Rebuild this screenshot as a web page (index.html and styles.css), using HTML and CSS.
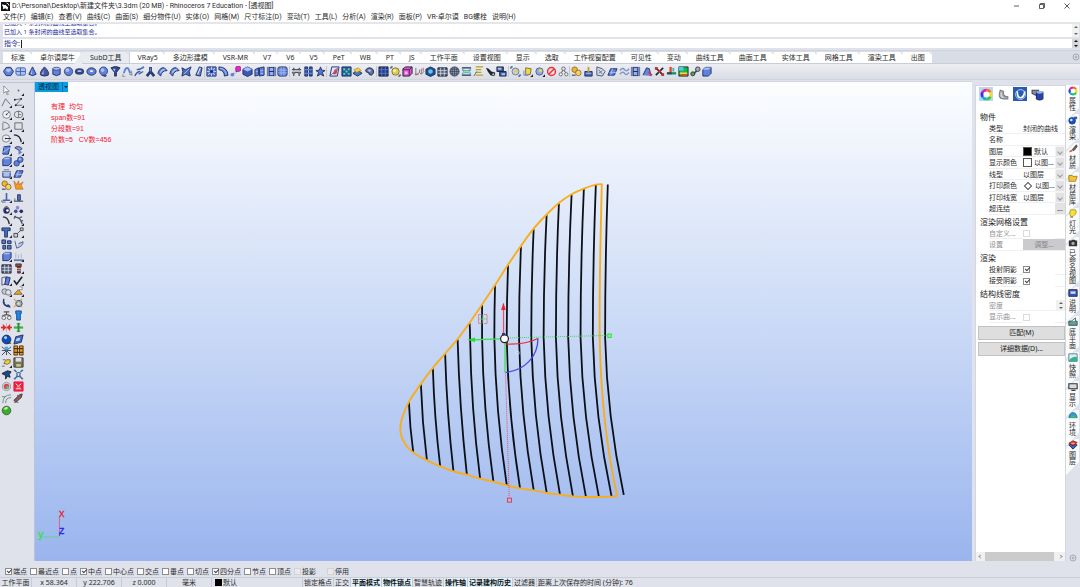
FILE: index.html
```html
<!DOCTYPE html>
<html lang="zh-CN">
<head>
<meta charset="utf-8">
<title>Rhinoceros 7 Education</title>
<link rel="stylesheet" href="styles.css">
</head>
<body>
<header class="titlebar">
  <svg class="app-icon" viewBox="0 0 10 10"><rect width="10" height="10" fill="#111"/><path d="M1 3c2-1 2 1 4 0l3 3-1 3-2-2-3 1c1-2 0-3-1-5z" fill="#fff"/><path d="M6 1l2 1 1 2" stroke="#fff" fill="none"/></svg>
  <h1 class="title">D:\Personal\Desktop\新建文件夹\3.3dm (20 MB) - Rhinoceros 7 Education - [透视图]</h1>
  <div class="window-buttons">
    <button aria-label="最小化"><svg viewBox="0 0 8 8"><path d="M1 4h5"/></svg></button>
    <button aria-label="还原"><svg viewBox="0 0 8 8"><path d="M1.500 2.500h4v4h-4zM2.500 2.500v-1h4v4h-1"/></svg></button>
    <button aria-label="关闭"><svg viewBox="0 0 8 8"><path d="M1.500 1.500l5 5M6.500 1.500l-5 5"/></svg></button>
  </div>
</header>
<nav class="menu">
  <button>文件(F)</button><button>编辑(E)</button><button>查看(V)</button><button>曲线(C)</button><button>曲面(S)</button><button>细分物件(U)</button><button>实体(O)</button><button>网格(M)</button><button>尺寸标注(D)</button><button>变动(T)</button><button>工具(L)</button><button>分析(A)</button><button>渲染(R)</button><button>面板(P)</button><button>VR-卓尔谟</button><button>BG螺栓</button><button>说明(H)</button>
</nav>
<section class="command">
  <div class="history"><p>已加入 1 条封闭的曲线至选取集合。</p><p>已加入 1 条封闭的曲线至选取集合。</p><span class="spin"><i class="up"></i><i class="down"></i></span></div>
  <div class="prompt"><label for="cmd">指令:</label><i class="caret"></i><input id="cmd" type="text"><span class="spin dark"><i class="up"></i><i class="down"></i></span></div>
</section>
<div class="tabbar">
  <nav class="tabs">
    <button>标准</button><button>卓尔谟犀牛</button><button class="active">SubD工具</button><button>VRay5</button><button>多边形建模</button><button>VSR-MR</button><button>V7</button><button>V6</button><button>V5</button><button>PeT</button><button>WB</button><button>PT</button><button>JS</button><button>工作平面</button><button>设置视图</button><button>显示</button><button>选取</button><button>工作视窗配置</button><button>可见性</button><button>变动</button><button>曲线工具</button><button>曲面工具</button><button>实体工具</button><button>网格工具</button><button>渲染工具</button><button>出图</button>
  </nav>
  <button class="gear" aria-label="选项"><svg viewBox="0 0 8 8"><circle cx="4" cy="4" r="3"/><circle cx="4" cy="4" r="1"/></svg></button>
</div>
<div class="toolbar" id="toolbar"></div>
<main class="main">
  <aside class="side"><div class="side-grid" id="side"></div></aside>
  <section class="viewport">
    <div class="view-label"><button class="view-name">透视图</button><button class="view-menu" aria-label="视图菜单"></button></div>
    <div class="curve-info"><p>有理&nbsp; 均匀</p><p>span数=91</p><p>分段数=91</p><p>阶数=5&nbsp;&nbsp; CV数=456</p></div>
    <svg class="scene" viewBox="34 82 937 480" preserveAspectRatio="xMinYMin meet">
      <g id="ribs" fill="none" stroke="#0b1018" stroke-width="1.800"></g>
      <path id="outline" fill="none" stroke="#f8ae1c" stroke-width="1.900"/>
      <path d="M602 184.300C600.500 250 599 300 600 345C601.500 405 608 455 617.500 497" fill="none" stroke="#f8ae1c" stroke-width="1.900"/>
      <g fill="none">
        <path d="M508 338.500L607 336" stroke="#3fdc52" stroke-dasharray="1 1"/>
        <rect x="608" y="334.500" width="3.500" height="3.500" stroke="#32e246" fill="#8cf09a"/>
        <path d="M500 339.500L475 340.300" stroke="#3be44e" stroke-width="1.300"/>
        <path d="M467 340.300l8-2.300v4.500z" fill="#22e032"/>
        <path d="M503.500 335V310" stroke="#e8505c" stroke-width="1.200"/>
        <path d="M503.400 303l2.300 7.500h-4.600z" fill="#ee2430"/>
        <path d="M505 344.500q20 1 33-5.500" stroke="#e62b3a" stroke-width="1.300"/>
        <path d="M538 339c0 18-13 32-32.500 34" stroke="#4348e6" stroke-width="1.300"/>
        <path d="M505 344v29" stroke="#50df66" stroke-width="1.500"/>
        <path d="M505.500 374L509.200 498" stroke="#dd526b" stroke-dasharray="1 1"/>
        <rect x="507.500" y="499" width="4" height="4" stroke="#e83c50"/>
        <path d="M509 344l7 8" stroke="#dfe6f5" stroke-dasharray="1 2"/>
        <circle cx="517.500" cy="353.500" r="1.800" stroke="#dfe6f5" stroke-width=".7"/>
        <path d="M502 335.500v-2h3v2" fill="#2532c8"/>
        <circle cx="504.500" cy="339.300" r="3.900" fill="#fff" stroke="#222" stroke-width="1.200"/>
        <path d="M481.500 315h-3v9h3M484 315h3v9h-3" stroke="#e2727c" stroke-width=".8"/>
        <path d="M479 319.500h8M482.800 315v9" stroke="#6ccf85" stroke-width=".8"/>
        <path d="M58.500 518v19" stroke="#d06a86"/>
        <path d="M58.500 538H42" stroke="#5fd38c"/>
        <path d="M58.500 537v-4" stroke="#5a50c8"/>
      </g>
      <text x="58" y="518" fill="#e62637" stroke="#e62637" class="axis">x</text>
      <text x="37" y="539" fill="#28e438" stroke="#28e438" class="axis">y</text>
      <text x="58" y="535" fill="#2028ee" stroke="#2028ee" class="axis">z</text>
    </svg>
  </section>
  <aside class="panel">
    <div class="panel-modes" id="modes"></div>
    <h2>物件</h2>
    <div class="props">
      <span>类型</span><b class="span">封闭的曲线</b>
      <label for="p-name">名称</label><input id="p-name" type="text"><i></i>
      <span>图层</span><b><em class="sw black"></em>默认</b><button class="drop" aria-label="图层"></button>
      <span>显示颜色</span><b><em class="sw"></em>以图...</b><button class="drop" aria-label="显示颜色"></button>
      <span>线型</span><b>以图层</b><button class="drop" aria-label="线型"></button>
      <span>打印颜色</span><b><em class="sw diamond"></em>以图...</b><button class="drop" aria-label="打印颜色"></button>
      <span>打印线宽</span><b>以图层</b><button class="drop" aria-label="打印线宽"></button>
      <span>超连结</span><b></b><button class="more">...</button>
    </div>
    <h2>渲染网格设置</h2>
    <div class="props dim">
      <label for="p-custom">自定义...</label><input id="p-custom" type="checkbox" disabled><i></i>
      <span>设置</span><button class="adjust" disabled>调整...</button>
    </div>
    <h2>渲染</h2>
    <div class="props">
      <label for="p-cast">投射阴影</label><input id="p-cast" type="checkbox" checked><i></i>
      <label for="p-recv">接受阴影</label><input id="p-recv" type="checkbox" checked><i></i>
    </div>
    <h2>结构线密度</h2>
    <div class="props dim">
      <label for="p-dens">密度</label><input id="p-dens" type="text" disabled><span class="spin"><i class="up"></i><i class="down"></i></span>
      <label for="p-iso">显示曲...</label><input id="p-iso" type="checkbox" disabled><i></i>
    </div>
    <div class="actions">
      <button>匹配(M)</button>
      <button>详细数据(D)...</button>
    </div>
    <div class="hscroll"><i class="left"></i><span></span><i class="right"></i></div>
  </aside>
  <nav class="vtabs">
    <div id="vtabs"></div>
    <button class="gear" aria-label="面板选项"><svg viewBox="0 0 8 8"><circle cx="4" cy="4" r="3"/><circle cx="4" cy="4" r="1"/></svg></button>
  </nav>
</main>
<section class="osnap">
  <label><input type="checkbox" checked>端点</label><label><input type="checkbox">最近点</label><label><input type="checkbox">点</label><label><input type="checkbox" checked>中点</label><label><input type="checkbox">中心点</label><label><input type="checkbox">交点</label><label><input type="checkbox">垂点</label><label><input type="checkbox">切点</label><label><input type="checkbox" checked>四分点</label><label><input type="checkbox">节点</label><label><input type="checkbox">顶点</label><label class="off"><input type="checkbox" disabled>投影</label><label class="off"><input type="checkbox" disabled>停用</label>
</section>
<footer class="status">
  <button class="c-plane">工作平面</button><span class="c-num">x 58.364</span><span class="c-num">y 222.706</span><span class="c-num">z 0.000</span><span class="c-num">毫米</span><button class="c-layer"><em></em>默认</button>
  <button>锁定格点</button><button>正交</button><button class="on">平面模式</button><button class="on">物件锁点</button><button>智慧轨迹</button><button class="on">操作轴</button><button class="on">记录建构历史</button><button>过滤器</button><span class="c-msg">距离上次保存的时间 (分钟): 76</span>
</footer>
<script src="app.js"></script>
</body>
</html>
```
FILE: styles.css
```css
* { box-sizing: border-box; margin: 0; padding: 0; }
html, body { height: 100%; }
body {
  display: flex; flex-direction: column; overflow: hidden;
  background: #dfe2ea; color: #2b2b2b;
  font: 7px/10px "Noto Sans", "Noto Sans CJK SC", sans-serif;
}
button { font: inherit; color: inherit; background: none; border: 0; white-space: nowrap; }
input { font: inherit; border: 0; background: none; min-width: 0; }
i, em { font-style: normal; }
b { font-weight: 400; }
svg { display: block; }

.titlebar { display: flex; align-items: center; height: 12px; padding-left: 1px; background: #fff; }
.titlebar, .menu { font-family: Roboto, "Noto Sans CJK SC", sans-serif; }
.app-icon { width: 9px; height: 9px; }
.title { flex: 1; padding-left: 2px; font-size: 7px; font-weight: 400; }
.window-buttons { display: flex; gap: 17px; padding-right: 9px; }
.window-buttons svg { width: 8px; height: 8px; fill: none; stroke: #333; stroke-width: .8; }

.menu { display: flex; gap: 5px; height: 12px; padding: 0 3px; background: #fff; border-bottom: 2px solid #e5e6ea; }
.menu button { line-height: 10px; }

.command { padding: 0 1px 0 3px; color: #1f2f96; height: 26px; }
.history { position: relative; display: flex; flex-direction: column; justify-content: flex-end; height: 13px; padding-left: 1px; background: #fff; overflow: hidden; font-size: 6px; }
.history p { flex: none; line-height: 9px; }
.prompt { position: relative; display: flex; align-items: center; height: 9px; margin-top: 2px; padding-left: 1px; background: #fff; }
.prompt input { flex: 1; height: 9px; outline: 0; }
.caret { width: 1px; height: 8px; margin-left: 1px; background: #222; }
.spin { display: flex; flex-direction: column; justify-content: space-around; align-items: center; background: #f1f1f2; width: 7px; }
.command .spin { position: absolute; right: 0; top: 0; bottom: 0; }
.spin.dark { background: #d5d6da; }
.up, .down { width: 0; height: 0; border: 2px solid transparent; }
.up { border-top: 0; border-bottom-color: #666; }
.down { border-bottom: 0; border-top-color: #666; }
.dark .up { border-bottom-color: #111; }
.dark .down { border-top-color: #111; }

.tabbar { display: flex; justify-content: space-between; align-items: stretch; height: 14px; padding-left: 3px; border-top: 1px solid #cfd3dc; border-bottom: 1px solid #c9cdd8; background: #d9dde6; }
.tabs { display: flex; background: #fff; margin-top: 1px; }
.tabs button { position: relative; padding: 0 7px 0 8px; line-height: 12px; }
.tabs button::after { content: ""; position: absolute; right: 0; top: 0; width: 3px; height: 3px; background: #dfe2ea; clip-path: polygon(0 0, 100% 0, 100% 100%); }
.tabs button.active { background: #e9ebf1; border-right: 1px solid #cbd0da; }
.tabs button.active::before { content: ""; position: absolute; right: 100%; top: 0; width: 8px; height: 12px; background: #e9ebf1; clip-path: polygon(100% 0, 100% 100%, 0 100%); }
.gear svg { width: 8px; height: 8px; fill: none; stroke: #a3a9b6; stroke-width: 1; }

.toolbar { display: flex; align-items: center; height: 16px; padding: 0 34% 0 3px; background: linear-gradient(#eceef3, #dadde5); border-bottom: 1px solid #d0d4dd; }
.tool { height: 12px; display: grid; place-items: center; }
.toolbar .tool { flex: 1; min-width: 0; }
.tool svg { width: 11px; height: 11px; }
.sep { flex: none; width: 2px; height: 11px; border-left: 1px solid #c3c8d2; }

.main { flex: 1; min-height: 0; display: flex; padding-top: 1px; }
.side { flex: none; width: 34px; padding: 1px 0; }
.side-grid { display: grid; grid-template-columns: 12px 12px; grid-template-rows: repeat(28, 1fr); height: 334px; border-top: 1px solid #bfc4d0; padding-top: 2px; }
.side-grid .tool { height: auto; }
.viewport { position: relative; flex: 1; min-width: 0; margin-bottom: 2px; overflow: hidden; background: linear-gradient(#fcfdff, #cbdaf6 50%, #9ab5ee); border-left: 1px solid #b9c4da; border-top: 1px solid #d0d6e2; }
.scene { position: absolute; inset: 0; width: 100%; height: 100%; }
.axis { font: 11px "Liberation Sans", sans-serif; stroke-width: .3; }
.view-label { display: inline-flex; height: 10px; background: #0a9de2; color: #06263c; vertical-align: top; }
.view-name { padding: 0 3px; }
.view-menu { width: 6px; border-left: 1px solid #0672a8; display: grid; place-items: center; }
.view-menu::before { content: ""; border: 2px solid transparent; border-bottom: 0; border-top-color: #06263c; }
.curve-info { padding: 9px 16px; color: #f3202c; font: 7px/11px "Liberation Sans", "Noto Sans CJK SC", sans-serif; }

.panel { flex: none; width: 91px; margin: 4px 0 2px 3px; display: flex; flex-direction: column; background: #fff; border: 1px solid #d3d7e0; border-bottom: 0; }
.panel-modes { display: flex; gap: 3px; height: 24px; padding: 1px 3px; }
.mode { width: 14px; height: 14px; display: grid; place-items: center; }
.mode svg { width: 13px; height: 13px; }
.mode.sel { background: #bcd4f5; }
.mode.vray { background: #2a5cae; }
.panel h2 { padding-left: 4px; font-size: 8px; line-height: 13px; font-weight: 400; color: #222; }
.props { display: grid; grid-template-columns: 34px 1fr 10px; grid-auto-rows: 11px 12px; margin-left: 13px; }
.props > * { border-bottom: 1px solid #f0f0f2; line-height: 11px; white-space: nowrap; }
.props > b { display: flex; align-items: center; }
.props > .span { grid-column: 2 / 4; }
.props input[type=text] { border-bottom: 1px solid #f0f0f2; }
.props.dim { color: #8e8e92; }
.props .drop { background: #e2e2e4; border: 1px solid #f2f2f3; display: grid; place-items: center; }
.drop::before { content: ""; width: 3px; height: 3px; border: solid #999; border-width: 0 1px 1px 0; transform: rotate(45deg); }
.props .more { background: #e2e2e4; line-height: 8px; }
.props .adjust { grid-column: 2 / 4; background: #cbcbcd; color: #88888c; }
.sw { flex: none; width: 9px; height: 9px; margin-right: 2px; border: 1px solid #555; background: #fff; }
.sw.black { background: #000; }
.sw.diamond { width: 6px; height: 6px; margin: 0 4px 0 2px; transform: rotate(45deg); }
input[type=checkbox] { appearance: none; position: relative; flex: none; width: 7px; height: 7px; border: 1px solid #8b8d93; background: #fff; }
input[type=checkbox]:checked::after { content: ""; position: absolute; left: 1px; top: 0; width: 4px; height: 2px; border: solid #444; border-width: 0 0 1px 1px; transform: rotate(-45deg); }
input[type=checkbox]:disabled { border-color: #d3d3d5; }
.props input[type=checkbox] { align-self: center; border-bottom: 1px solid #8b8d93; }
.props input[type=checkbox]:disabled { border-color: #dcdcde; }
.props .spin { width: 10px; border-left: 1px solid #fff; }
.actions { display: flex; flex-direction: column; gap: 2px; padding: 3px 0 0 2px; }
.actions button { height: 14px; background: #dedede; border: 1px solid #c2c2c4; line-height: 12px; color: #222; }
.hscroll { display: flex; align-items: center; height: 9px; margin-top: auto; background: #f0f0f1; }
.hscroll span { flex: 1; height: 9px; margin: 0 5px 0 3px; background: #cbcbcb; }
.left, .right { width: 3px; height: 3px; border: solid #999; border-width: 0 0 1px 1px; transform: rotate(45deg); margin-left: 3px; }
.right { transform: rotate(225deg); margin: 0 3px 0 0; }

.vtabs { flex: none; width: 14px; display: flex; flex-direction: column; justify-content: space-between; padding-top: 4px; }
#vtabs { isolation: isolate; padding-top: 1px; }
.vtab { position: relative; display: flex; flex-direction: column; align-items: center; width: 13px; padding-bottom: 4px; font-size: 7px; }
.vtab::before { content: ""; position: absolute; z-index: -1; inset: -1px 0 -6px; background: #fafbfd; clip-path: polygon(0 9px, 9px 0, 100% 0, 100% calc(100% - 13px), 0 100%); }
.vtab:first-child::before { background: #fff; clip-path: polygon(0 0, 100% 0, 100% calc(100% - 13px), 0 100%); }
.vtab span { width: 7px; line-height: 7px; white-space: normal; word-break: break-all; padding-top: 1px; }
.vtab svg { width: 10px; height: 10px; }
.vtabs .gear { width: 14px; display: grid; place-items: center; margin-bottom: 1px; }

.osnap { display: flex; align-items: center; height: 14px; padding: 3px 5px 0; white-space: nowrap; }
.osnap label { display: flex; align-items: center; gap: 1px; margin-right: 3px; }
.osnap .off { margin-right: 11px; }
.osnap .off input { background: #e9e9ea; }
.status { display: flex; height: 10px; border-top: 1px solid #c9cdd6; white-space: nowrap; line-height: 9px; }
.status > * { flex: none; border-right: 1px solid #c6cad3; text-align: center; line-height: 9px; padding: 0 1px; }
.status .c-plane { width: 32px; }
.status .c-num { width: 45px; }
.status .c-layer { width: 91px; display: flex; align-items: center; gap: 1px; padding-left: 3px; }
.c-layer em { width: 7px; height: 7px; background: #000; }
.status .on { background: #dff1fb; font-weight: 700; color: #111; }
.status .c-msg { flex: 1; text-align: left; border: 0; }
```
FILE: app.js
```js
var B = '#5f83dc', L = '#a9c2f5', D = '#222f66', K = '#20242e';
function p(d, fill, stroke, w) {
  return '<path d="' + d + '" fill="' + (fill || 'none') + '"' +
    (stroke ? ' stroke="' + stroke + '" stroke-width="' + (w || 1) + '"' : '') + '/>';
}
function c(x, y, r, fill, stroke) {
  return '<circle cx="' + x + '" cy="' + y + '" r="' + r + '" fill="' + (fill || 'none') + '"' +
    (stroke ? ' stroke="' + stroke + '" stroke-width=".8"' : '') + '/>';
}
var corner = p('M12 9v3h-3z', K);
var icons = {
  hex: p('M3.500 1.500h5l3 4.500-3 4.500h-5L.5 6z', B, D) + p('M4 3h4l1 2-3 2-3-2z', L),
  box: p('M1 4q0-2 2-2h7q1.500 0 1.500 2v4q0 2-2 2H3Q1 10 1 8z', L, '#4560a8') + p('M1 6h10M6 2v8', '', '#4560a8'),
  cone: p('M6 1l4 8q-4 3-8 0z', B, D) + p('M5.500 3v6H4z', L),
  coneD: p('M6 1q6 6 4 9-4 2-8 0-2-3 4-9z', '#45599c', D) + p('M5 4v5H3z', L),
  cyl: p('M2 3v6q4 3 8 0V3z', B, D) + '<ellipse cx="6" cy="3" rx="4" ry="1.600" fill="' + L + '" stroke="' + D + '" stroke-width=".7"/>',
  ball: c(6, 6, 4.500, B, D) + c(4.800, 4.500, 2, L),
  torusD: '<ellipse cx="6" cy="6" rx="5" ry="3.500" fill="#334480"/><ellipse cx="6" cy="5.500" rx="2.500" ry="1" fill="#c3d0f0"/>',
  torus: '<ellipse cx="6" cy="6" rx="5" ry="4" fill="' + B + '" stroke="' + D + '"/><ellipse cx="6" cy="5.500" rx="2" ry="1" fill="#fff"/>',
  ballD: c(6, 5.500, 4.500, B, D) + c(5, 4.500, 2, L) + p('M3 10h7L8 12z', D),
  funnel: p('M1 2q5-3 10 0L7 7v4H5V7z', '#34478d', D) + p('M3 3h3L5 6z', L),
  arrows: p('M2 8q2-8 5-5l2 5', '', B, 2) + p('M1 9v3h3M10 5l1 5-3-1', '', '#666', .8),
  lines: p('M1 11q2-5 6-5M3 4q4 0 8-3M5 9l5-3', '', '#3c5aa5', 1.500) + c(9, 2, 1.300, B),
  tripod: p('M6 1v5L2 11M6 6l4 5', '', '#2a3970', 3) + p('M6 2v4', '', B),
  patch: p('M1 8q2-7 7-6l3 3q-6 0-7 6z', B, D) + p('M3 7q2-4 5-4l1 1q-4 1-5 4z', L),
  starp: p('M1 2l4 2 6-3-2 5 1 5-5-2-4 2 1-5z', '#4d6cc0', D) + p('M3 9l6-6', '', L),
  twist: p('M7 1l3 1-2 9-5-1z', B, D) + p('M8 2L5 9', '', '#fff'),
  squareX: p('M1 1h10v10H1z', B, D) + p('M2 2l8 8M10 2l-8 8M6 1v10M1 6h10', '', '#e3ebff', .8) + c(6, 6, 1.800, D),
  bend: p('M1 1q9 0 10 9L7 11Q7 5 1 4z', B, D) + p('M2 2.500q6 0 7 7', '', L),
  pink: p('M2 10l8-7', '', '#5c4bb0', 2) + c(2.500, 9.500, 2, B) + c(5, 7, 1.500, '#ddd') + c(9, 3, 3, '#e62ac6', '#941a80'),
  cube: p('M6 1l5 2.500v5.500L6 11.500 1 9V3.500z', '#3d59b5', D) + p('M6 1l5 2.500L6 6 1 3.500z', L),
  slabs: p('M1 4l4-2v8l-4 1zM6 2l5-1v9l-5 1z', B, D) + p('M2 6h2M7 5h3M7 8h3', '', L),
  film: p('M1 1h10v10H1z', D) + p('M4 2h4v3.500H4zM4 6.500h4V10H4z', '#91b1f5') + p('M2.200 1v10M9.800 1v10', '', '#dce6ff', 1) ,
  grid: p('M1 3q0-2 2-2h6q2 0 2 2v6q0 2-2 2H3Q1 11 1 9z', B, D) + p('M1 4.500h10M1 7.500h10M4.500 1v10M7.500 1v10', '', '#cbd9fb', .6),
  gridK: p('M1 2h10v9H1z', '#55627f', K) + p('M1 5h10M1 8h10M4 2v9M8 2v9', '', '#d8e0ef', .8),
  bridge: p('M1 4h10M1 7h10M3 2v3M9 2v3M3 7v4M9 7v4', '', '#4b5263', 1.400) + c(3, 8, 1.500, '#777') + c(9, 8, 1.500, '#777'),
  bolts: p('M2 1h3v10H2zM7 1h3v10H7z', '#3b559f', D) + p('M1 4h10M1 8h10', '', B, 1.500),
  star: p('M6 1l1.300 3.500L11 5 8 7l1.500 4L6 9l-3.500 2L4 7 1 5l3.700-.5z', '#5977c9', D),
  redp: p('M3 1h8L9 11H1z', '#dfe6fb', D) + p('M4 9l2-5 4-2-2 7z', '#e2394a') + p('M2 10l8-8', '', B),
  green: p('M1 1h10v10H1z', '#245bb0', D) + p('M2.500 2.500h2v2h-2zM7.500 2.500h2v2h-2zM2.500 7.500h2v2h-2zM7.500 7.500h2v2h-2zM5 5h2v2H5z', '#5fe36a'),
  yb: p('M1 8q5-5 10 0l-5 3z', '#4f73ce', D) + p('M2 4l5-2 3 3-5 2z', '#f1d23b', '#94791b', .6),
  blob: p('M2 4q4-4 8 0 2 4-2 6-3 0-3-3-4 0-3-3z', '#5f72ab', K) + c(6, 5, 1.500, L),
  dgrid: p('M1 1h10v10H1z', '#273f8a', K) + p('M4 1v10M1 4h10M1 8h10M8 1v10', '', B, .8),
  yball: c(6, 6, 4, '#dfce54', '#6a5c19') + c(5, 5, 1.500, '#fdf6b8') + p('M1 3V1h2M11 9v2H9', '', K) ,
  mag: p('M1 3l3-2h7v7l-3 3H1z', '#e64fd0', K) + p('M1 4h7v7M8 4l3-3', '', K, .8) + p('M3 6h3v3H3z', '#fbc4f2'),
  axes: p('M2 2v8l4-3 2 2V3M6 7V4M8 9l3-3', '', '#727988') + p('M1 9h4M10 2v4', '', '#e2394a'),
  cyan: p('M6 1l5 2.500v5.500L6 11.500 1 9V3.500z', '#224d8b', D) + c(6, 6, 2.500, '#5dc6ec'),
  sgrid: c(6, 6, 5, '#8493b0', K) + p('M1 6h10M6 1v10M2 3.500h8M2 8.500h8M3.500 2v8M8.500 2v8', '', '#2b3347', .6),
  hour: p('M1 2h10M1 10h10', '', '#22305f', 1.500) + p('M1 3q5 3 10 0v2q-5 2-10 0zM1 9q5-3 10 0V7.500q-5-2-10 0z', '#52b8a4') + p('M2 5q2 1 0 2M10 5q-2 1 0 2', '', B),
  list: p('M3 1h8M3 4h6M3 7h6M3 10h8', '', '#b7a22b', 1.500) + p('M1 11l3-5', '', '#666'),
  wrench: p('M1 2l3 1 3 3 4 1v3l-2 1-3-1-3-4z', K) + c(9, 9, 1.200, '#b8c2d8'),
  mons: p('M1 1h7v5H1zM4 6h7v5H4z', '#3557a8', K) + p('M2 2h4v2H2zM6 8h4v2H6z', L),
  sel: c(6, 6, 3.800, '#c8cfdd', '#526080') + p('M4 7l3-4 2 3z', '#e3cb48') + p('M1 3V1h2M9 11h2V9', '', K),
  selY: p('M4 2l6 1-1 6-5 1z', '#f0d84c', '#807023') + p('M2 5v5h5', '', B) + corner,
  selB: c(6, 6, 4, '#8ea7e1', '#39508f') + c(7, 5, 2, '#e6d258') + corner,
  ban: c(6, 6, 4.300, '#f4dbe0') + '<circle cx="6" cy="6" r="4.300" fill="none" stroke="#e8323c" stroke-width="1.600"/>' + p('M3 9l6-6', '', '#e8323c', 1.600),
  chain: c(6, 3, 2, '#dcdfe6', '#555') + c(3, 9, 1.800, '#eee', '#555') + c(9, 9, 1.800, '#eee', '#555') + p('M5 5L4 7M7 5l1 2', '', '#444'),
  gearY: c(4, 4, 3, '#f1b631', '#7f5b10') + c(8, 7.500, 3, '#f7d169', '#7f5b10') + p('M1 10h4', '', K),
  stamp: p('M2 6h8v5H2z', '#4a69bd', D) + p('M6 1v6', '', '#d09a2c', 2) + p('M3 8h6', '', L),
  doc: p('M2 1l6 2 3 3-3 5-6-1z', '#d6dcec', '#4b5469') + p('M4 4l4 5M4 8l4-3', '', '#5b6f9f'),
  plate: p('M4 3h7l-3 7H1z', B, D) + p('M3 7h7M6 3L4 10', '', L),
  wave: p('M1 5q3-4 5-1t5-1M1 9q3-4 5-1t5-1', '', '#7b90c6', 1.500),
  tri: p('M1 10L5 2l3 1 2 8', '#6685da', D) + p('M7 7l4 3', '', '#e83030', 1.600),
  netr: p('M2 2l8 8M10 2l-8 8', '', K, 1.800) + c(6, 6, 1.600, '#df2d2d') + p('M1 1h3v3H1zM8 8h3v3H8z', '#b23a3a'),
  axisC: p('M5 1v7', '', '#e9402b', 2.500) + p('M5 8h6', '', '#168d5f', 2.500) + p('M1 8h5', '', '#194c50', 2.500) + p('M8 2v4', '', '#35b5c8', 2),
  rain: p('M1 1h10v10H1z', '#17b84a', K) + p('M1 1h5v4H1z', '#3fd5dd') + p('M2 7h8v2H2z', '#eadb37') + p('M3 9h7v2H3z', '#e23f2d'),
  gears: p('M3 10l6-7', '', '#4b5563', 2) + c(3, 8.500, 2.200, '#59a04b', K) + c(8.500, 3.500, 2.500, '#a3a9b4', K),
  cubeL: p('M2 4l3-2.500h6V8l-3 3H2z', B, D) + p('M2 4l3-2.500h6L8 4z', L),
  cursor: p('M3 1v8l2-2 2 4 1-1-2-3h3z', '#fff', '#777', .8),
  dot: c(6, 6, 1, '#666') + corner,
  poly: p('M1 10l4-8 5 6', '', '#676b78') + corner,
  ctrl: p('M2 3l7-1-6 7h7', '', '#676b78') + c(2, 3, 1, K) + c(9, 2, 1, K) + c(3, 9, 1, K) + corner,
  circ: c(6, 6, 4.200, '#edf0f5', '#666') + p('M6 6l3-3', '', '#666') + c(6, 6, .8, K) + corner,
  ell: '<ellipse cx="6" cy="6" rx="4.500" ry="3.500" fill="none" stroke="#666"/>' + p('M6 2v7M6 6h3', '', '#666', .8) + corner,
  arc: p('M2 1q8 1 7 7M2 10l7-3M2 2v8', '', '#777') + corner,
  rect: p('M2 2h8v7H2z', '', '#666') + corner,
  circ2: c(5.500, 6, 4, '#eee', '#666') + p('M5 6h6', '', K) + c(5, 6, .8, K) + corner,
  fil: p('M1 2q7 0 8 8', '', K, 1.400) + corner,
  srf: p('M3 2l7-1-2 9H2z', B, D) + p('M1 3h3M2 8l8-5', '', L) + corner,
  ext: p('M2 3q4-3 8 1L7 6z', '#93a4cf', D) + p('M6 5v6l4-3z', B) + corner,
  cube2: p('M2 3.500l3-2h6v6l-3 3H2z', B, D) + p('M2 3.500l3-2h6l-3 2z', L) + corner,
  balls: c(4, 8, 3, B, D) + c(8, 4, 3, B, D) + c(7.500, 3.500, 1.200, L) + corner,
  tube: p('M2 5v5h8V5', L, D) + p('M1 4h10M3 2h6', '', '#5a6b98') + corner,
  boom: p('M1 1l3 4 2-4 1 4 4-3-2 4 2 4H3z', '#f49a1f', '#ad5d0b', .6),
  cut: p('M2 9h8M6 1v8', '', '#4569b0', 1.800) + p('M1 9v2h4', '', '#666') + corner,
  cut2: p('M1 10h10', '', K) + p('M5 3h3v6H5z', '#5677bf', D) + p('M2 7v3', '', '#666'),
  lock: c(6, 7, 3.500, D) + p('M3 6q3-7 6 0', '', '#666', 1.200) + c(7, 7, 1.400, '#fff') + corner,
  dots3: c(5, 4, 2, '#8a8fd0') + c(3, 8, 2, '#454c95') + c(9, 8, 2, '#252c68'),
  crv: p('M2 2q6 0 7 8', '', '#333', 1.500) + corner,
  crv2: p('M1 2q8 0 9 8M3 1l-2 3M7 3l3-1M8 7l3-1', '', '#4b5263', 1.200) + corner,
  T: p('M1 1h9v3H7v7H4V4H1z', '#4270c5', D) + corner,
  nodes: p('M3 9l6-6', '', '#555') + p('M1 7h4v4H1zM8 1h3v3H8z', '#c8cfdf', '#444') + corner,
  quad: p('M1 1h4v4H1zM7 2h4v3H7zM2 7h3v4H2zM7 7h4v4H7z', '#5d78b8', D) ,
  leaf: p('M2 2l2 8M4 10q7-2 7-7L6 5', '#bac8e8', '#4b5e91') ,
  part: p('M1 10h10', '', '#6380ba', 2) + p('M3 2v6M6 4v4M9 3v5', '', '#aab4cb') + corner,
  screw: p('M3 1h6v3H3zM5 4h3v7H5z', '#8e4a4d', '#533') + p('M4 6h5M4 8h5', '', '#ddd', .7) + corner,
  sheets: p('M1 3l4-1v8l-4 1z', '#dce4f5', '#556') + p('M6 2l4 1-2 8-4-1z', B, D) + corner,
  check: p('M1 6l3 4 6-8', '', K, 1.800) + corner,
  rings: c(4, 6, 3, '#c4cad6', '#555') + c(8, 7, 3, '#dbe0ea', '#555') + corner,
  hat: p('M1 9l5-5 4 5z', '#e7a53a', '#846022') + p('M6 4h4V1H7', '#fff', '#888') + corner,
  moon: p('M3 1q-3 8 7 9-1-4-4-2Q3 7 3 1z', '#4a5cb0', D),
  sun: c(6.500, 6, 3.500, '#86aee1', D) + p('M1 1l3 3M10 1l-2 2M10 10L8 8M1 10l3-3', '', '#e49c34', 1.200) + c(6, 6, 1.500, '#f4df5e'),
  glass: p('M3 2h6M6 2v3M1 7q5-4 10 0M2 9h3M7 9h3', '', '#555', 1.200) + c(3, 8.500, 2, '#eee', '#555') + c(9, 8.500, 2, '#eee', '#555'),
  tb: p('M3 1h6v3H8v7H4V4H3z', '#2386e0', '#174a9d'),
  redx: p('M0 6h12', '', '#e5252c', 1.800) + p('M5.500 6L2 2v8zM6.500 6L10 2v8z', '#e5252c') + p('M6 1v10', '', '#c98', .8),
  grx: p('M1 6h10', '', '#40b340', 2.500) + p('M6 1v10', '', '#258f30', 2) + p('M4 2h4M4 10h4', '', '#258f30'),
  orb: c(6, 6, 4.800, '#134cb3', '#0b2360') + c(5, 4, 1.600, '#a5d3ff') + p('M7 10h4', '', K),
  sheet: p('M3 3l8-2-2 8-8 2z', '#3a6cc4', D) + p('M4 5l4-1-1 3-4 1z', '#c5dcfb'),
  spider: p('M6 6L1 2M6 6l5-4M6 6H1M6 6h5M6 6l-5 5M6 6l5 5M6 6v5', '', '#354455') + p('M4 2h4L6 7z', '#31a9ea'),
  ogrid: p('M1 1h4v10H1zM7 1h4v10H7z', '#e8991d', '#50330b') + p('M1 4h10M1 8h10', '', '#50330b', 1.200),
  ysq: p('M3 7l3-4h4v3L7 8z', '#f2cd41', '#7c6a2b') + p('M2 3h3M1 10h3', '', '#666') + corner,
  save: p('M1 1h10v10H1z', '#7b7f58', '#333') + p('M3 1h6v4H3z', '#dce0e8') + p('M3 7h6v4H3z', '#c6c57f', '#444', .6),
  bird: p('M1 5l6-3 4 1-2 3 1 3-3-1-2 3V7z', '#1b4b8d', K),
  xarc: p('M1 1q5 6 10 0M1 11q5-6 10 0M2 1q5 5 0 10M10 1q-5 5 0 10', '', '#426c9f', 1.300),
  gecko: c(6, 6, 4.500, '#d8dadd', '#888') + c(6, 6, 3, '#dd4545') + c(7, 7, 1.600, '#4cbd9d'),
  redbox: p('M1 1h10v10H1z', '#ed1c45', '#ed1c45') + p('M3 3l3 2.500L9 3M3 8.500h6', '', '#fff') + p('M4 6.500h4', '', '#f2d53b'),
  offs: p('M2 11q0-9 9-9M5 11q0-6 6-6M1 4h4', '', '#698b7c'),
  drill: p('M1 8l6-6 3-1-1 4-6 5z', '#8d5b5b', '#433') + p('M1 10h5M5 2v4', '', '#666'),
  orbg: c(6, 6, 4.700, '#3dab2f', '#1e5a1a') + p('M3 4q2-3 5-1Q6 6 4 5z', '#c5f0a0'),
  wheel: '<path d="M6 2a4 4 0 0 1 3.500 2" stroke="#f2701f"/><path d="M9.500 4a4 4 0 0 1 0 4" stroke="#ecdc2b"/><path d="M9.500 8A4 4 0 0 1 6 10" stroke="#38c838"/><path d="M6 10a4 4 0 0 1-3.500-2" stroke="#12b3d6"/><path d="M2.500 8a4 4 0 0 1 0-4" stroke="#3a32e0"/><path d="M2.500 4A4 4 0 0 1 6 2" stroke="#e0219a"/><circle cx="6" cy="6" r="2.800" fill="#fff"/>',
  pipe: p('M3 2q-3 8 3 8h4V8Q5 8 6 3z', '#a9abb2', '#7d7f86') + p('M4 4q-1 4 2 5', '', '#e4e5e9'),
  vray: p('M3 3q0 6 3 6t4-6', '', '#fff', 1.500) + c(6, 6, 4.500, '', '#c8dcff'),
  mat: p('M1 2h6v3L5 7 1 5z', '#8491a9', '#445') + p('M5 4v6q3 2 6 0V4z', '#2644ad', D) + '<ellipse cx="8" cy="4" rx="3" ry="1.200" fill="#8fb0f1"/>',
  rend: c(5, 7, 4, '#1b52bd', '#0e2b6c') + c(4, 6, 1.500, '#d4e6ff') + p('M7 2h4v3H7z', '#47588a'),
  brush: p('M5 7l5-6 1 2-4 5z', '#7a5c55', '#444') + p('M1 10q1-4 4-3 2 3-4 3z', '#e86a42'),
  folder: p('M1 3h4l1 1h5l-2 6H1z', '#f5c431', '#a47916'),
  lamp: p('M3 1h6q2 2 0 5L6 9H3L2 5z', '#f5e23c', '#a8921b') + p('M3 10h3', '', '#777'),
  cam: p('M1 3h3l1-1h3l1 1h2v7H1z', '#333') + c(6, 6.500, 2, '#aaa'),
  book: p('M1 2h10v8H1z', '#3953c5', '#223') + p('M3 4h6v3H3z', '#cbd8ff'),
  plane: p('M1 5h10v5H1z', '#5ba590', '#345') + p('M4 5l5-4v4', '#eee', '#555'),
  snap: p('M1 1h10v9H1z', '#dff0f4', '#478') + p('M1 9q5-6 10-4v5H1z', '#32b58f'),
  mon: p('M1 2h10v6H1z', '#d8dbe0', '#333', 1.300) + p('M4 10h5', '', '#333', 1.500),
  env: p('M1 8q1-6 5-6t5 6z', '#2f9ed3', '#1e6587') + p('M1 8h10l-4-3z', '#44bb78'),
  layers: p('M1 6l5-2 5 2-5 5z', '#3165cc', '#224') + p('M1 4l5-3 5 2-5 4z', '#e84030', '#722') + p('M4 4h4', '', '#f6c8b0')
};
function svg(name) { return '<svg viewBox="0 0 12 12"' + (name === 'wheel' ? ' fill="none" stroke-width="2.800"' : '') + '>' + icons[name] + '</svg>'; }
function tools(id, list) {
  document.getElementById(id).innerHTML = list.split(' ').map(function (n) {
    return n === '|' ? '<span class="sep"></span>' : '<button class="tool" aria-label="' + n + '">' + svg(n) + '</button>';
  }).join('');
}
tools('toolbar', 'hex box cone coneD cyl ball torusD torus ballD funnel arrows lines tripod patch patch starp twist | squareX bend pink cube slabs film grid | bridge bolts star | redp green yb blob | dgrid yball mag axes cyan gridK sgrid hour list wrench mons | sel selY selB ban chain | gearY stamp doc plate wave film tri netr axisC rain gears cubeL');
tools('side', 'cursor dot poly ctrl circ ell arc rect circ2 fil srf ext cube2 balls tube plate gearY boom cut cut2 lock dots3 crv crv2 T nodes quad leaf cube2 part gridK screw sheets check rings hat moon sun glass tb redx grx orb sheet spider ogrid ysq save bird xarc gecko redbox offs drill orbg');

document.getElementById('modes').innerHTML = [['wheel', 'sel'], ['pipe', ''], ['vray', 'vray'], ['mat', '']].map(function (m) {
  return '<button class="mode ' + m[1] + '" aria-label="' + m[0] + '">' + svg(m[0]) + '</button>';
}).join('');
document.getElementById('vtabs').innerHTML = [['wheel', '属性'], ['rend', '渲染'], ['brush', '材质'], ['folder', '材质库'], ['lamp', '灯光'], ['cam', '已命名视图'], ['book', '说明'], ['plane', '底平面'], ['snap', '快照'], ['mon', '显示'], ['env', '环境'], ['layers', '图层']].map(function (t) {
  return '<button class="vtab">' + svg(t[0]) + '<span>' + t[1] + '</span></button>';
}).join('');

/* Each rib: top x, top y, x at the tangent height, bottom x, bottom y */
var MID = 338;
var ribs = [
  [408.700, 403, 0, 413, 452.700], [420.700, 385, 0, 426.700, 460.700], [432.700, 369, 0, 440, 466.700],
  [445, 354.700, 0, 453.300, 471.700], [457.500, 340, 0, 466.700, 475], [469.500, 323.700, 470, 480, 479],
  [482, 305.500, 482, 493.300, 482], [495, 286, 494.300, 506.700, 485.700], [508, 265.700, 506.700, 520, 488.700],
  [521, 246.700, 519, 533.700, 490.700], [533.700, 229.500, 531.300, 546.700, 493.300], [546.700, 215.300, 543.700, 560, 495],
  [559, 203.700, 556, 573, 496.700], [571.700, 195, 568.300, 586, 497.300], [584, 189.300, 580.700, 599, 497.300],
  [596, 185.300, 593, 611.700, 497], [608, 184.700, 605.300, 624, 495.700]
];
document.getElementById('ribs').innerHTML = ribs.map(function (r) {
  var d = 'M' + r[0] + ' ' + r[1];
  if (!r[2]) {
    d += 'Q' + (r[0] + (r[3] - r[0]) * .2) + ' ' + (r[1] + r[4]) / 2 + ' ' + r[3] + ' ' + r[4];
  } else {
    d += 'Q' + r[2] + ' ' + (r[1] + MID) / 2 + ' ' + r[2] + ' ' + MID +
      'Q' + (r[2] + (r[3] - r[2]) * .1) + ' ' + (MID + (r[4] - MID) * .5) + ' ' + r[3] + ' ' + r[4];
  }
  return '<path d="' + d + '"/>';
}).join('');

var pts = ribs.slice(0, 16).reverse().map(function (r) { return [r[0], r[1] - .5]; });
pts.unshift([602.500, 184.300]);
pts.push([401.500, 420], [400.300, 433], [405, 445]);
ribs.slice(0, 16).forEach(function (r) { pts.push([r[3], r[4] + .5]); });
pts.push([617.700, 497]);
var path = 'M' + pts[0].join(' ');
for (var i = 0; i < pts.length - 1; i++) {
  var a = pts[i - 1] || pts[i], b = pts[i], e = pts[i + 1], f = pts[i + 2] || e;
  path += 'C' + [b[0] + (e[0] - a[0]) / 6, b[1] + (e[1] - a[1]) / 6, e[0] - (f[0] - b[0]) / 6, e[1] - (f[1] - b[1]) / 6, e[0], e[1]].join(' ');
}
document.getElementById('outline').setAttribute('d', path);
```
